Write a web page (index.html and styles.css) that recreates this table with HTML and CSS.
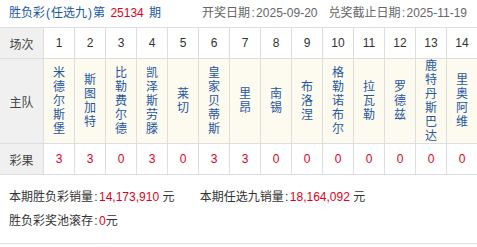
FILE: index.html
```html
<!DOCTYPE html>
<html lang="zh-CN">
<head>
<meta charset="utf-8">
<link rel="stylesheet" href="styles.css">
</head>
<body>
<div class="page">
  <div class="title">
    <span class="issue">胜负彩<span class="half">(</span>任选九<span class="half">)</span>第 <span class="red">25134</span> 期</span>
    <span class="date date-open">开奖日期<span class="half">:</span>2025-09-20</span>
    <span class="date date-end">兑奖截止日期<span class="half">:</span>2025-11-19</span>
  </div>
  <div class="grid">
    <div class="cell head">场次</div>
    <div class="cell num">1</div>
    <div class="cell num">2</div>
    <div class="cell num">3</div>
    <div class="cell num">4</div>
    <div class="cell num">5</div>
    <div class="cell num">6</div>
    <div class="cell num">7</div>
    <div class="cell num">8</div>
    <div class="cell num">9</div>
    <div class="cell num">10</div>
    <div class="cell num">11</div>
    <div class="cell num">12</div>
    <div class="cell num">13</div>
    <div class="cell num">14</div>

    <div class="cell head">主队</div>
    <div class="cell team"><span class="vt">米德尔斯堡</span></div>
    <div class="cell team"><span class="vt">斯图加特</span></div>
    <div class="cell team"><span class="vt">比勒费尔德</span></div>
    <div class="cell team"><span class="vt">凯泽斯劳滕</span></div>
    <div class="cell team"><span class="vt">莱切</span></div>
    <div class="cell team"><span class="vt">皇家贝蒂斯</span></div>
    <div class="cell team"><span class="vt">里昂</span></div>
    <div class="cell team"><span class="vt">南锡</span></div>
    <div class="cell team"><span class="vt">布洛涅</span></div>
    <div class="cell team"><span class="vt">格勒诺布尔</span></div>
    <div class="cell team"><span class="vt">拉瓦勒</span></div>
    <div class="cell team"><span class="vt">罗德兹</span></div>
    <div class="cell team"><span class="vt">鹿特丹斯巴达</span></div>
    <div class="cell team"><span class="vt">里奥阿维</span></div>

    <div class="cell head">彩果</div>
    <div class="cell res">3</div>
    <div class="cell res">3</div>
    <div class="cell res">0</div>
    <div class="cell res">3</div>
    <div class="cell res">0</div>
    <div class="cell res">3</div>
    <div class="cell res">3</div>
    <div class="cell res">0</div>
    <div class="cell res">0</div>
    <div class="cell res">0</div>
    <div class="cell res">0</div>
    <div class="cell res">0</div>
    <div class="cell res">0</div>
    <div class="cell res">0</div>
  </div>
  <div class="sales">
    <div class="line">
      <span class="item">本期胜负彩销量<span class="half">:</span><span class="red">14,173,910</span> 元</span>
      <span class="item item-second">本期任选九销量<span class="half">:</span><span class="red">18,164,092</span> 元</span>
    </div>
    <div class="line">胜负彩奖池滚存<span class="half">:</span><span class="red">0</span>元</div>
  </div>
</div>
</body>
</html>
```

FILE: styles.css
```css
html, body {
  margin: 0;
  padding: 0;
  background: #fff;
}

.page {
  width: 477px;
  font-family: "Liberation Sans", "Noto Sans CJK SC", sans-serif;
  font-size: 12px;
  color: #333;
}

.red {
  color: #e2001a;
}

.half {
  display: inline-block;
  width: 6px;
  text-align: center;
}

.title {
  height: 27px;
  line-height: 27px;
  padding-left: 9px;
  display: flex;
  white-space: nowrap;
}

.issue {
  color: #1a56a6;
}

.issue .red {
  margin: 0 2px;
}

.date {
  color: #666;
}

.date-open {
  margin-left: 41px;
}

.date-end {
  margin-left: 11px;
}

.grid {
  display: grid;
  grid-template-columns: 43px repeat(14, 30px);
  grid-template-rows: 30px 84px 30px;
  gap: 1px;
  background: #dedede;
  border-top: 1px solid #dedede;
  border-bottom: 1px solid #dedede;
}

.cell {
  display: flex;
  align-items: center;
  justify-content: center;
  background: #fff;
}

.head {
  background: #f0f0f0;
  color: #444;
}

.num {
  color: #333;
}

.team {
  background: #fdfbef;
}

.vt {
  display: block;
  width: 12px;
  line-height: 14px;
  word-break: break-all;
  color: #1f56a5;
}

.res {
  color: #e2001a;
}

.sales {
  padding: 10px 0 10px 9px;
  border-bottom: 1px solid #e0e0e0;
  color: #333;
}

.line {
  line-height: 24px;
  white-space: nowrap;
}

.item-second {
  margin-left: 22px;
}
```
